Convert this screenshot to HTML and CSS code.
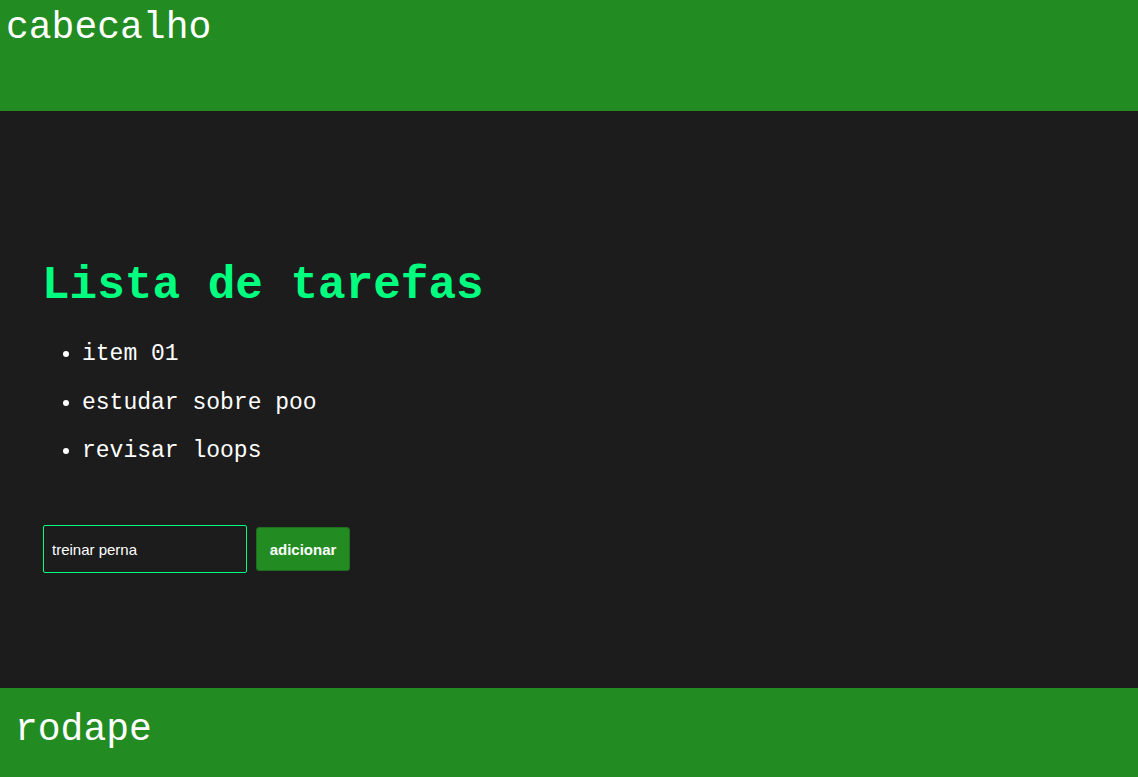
FILE: index.html
```html
<!DOCTYPE html>
<html lang="pt">
<head>
<meta charset="utf-8">
<title>Lista de tarefas</title>
<link rel="stylesheet" href="styles.css">
</head>
<body>
<header class="topo">cabecalho</header>
<main class="conteudo">
  <h1 class="titulo">Lista de tarefas</h1>
  <ul class="lista">
    <li>item 01</li>
    <li>estudar sobre poo</li>
    <li>revisar loops</li>
  </ul>
  <form class="form">
    <input class="campo" type="text" value="treinar perna">
    <button class="botao" type="button">adicionar</button>
  </form>
</main>
<footer class="rodape">rodape</footer>
</body>
</html>
```
FILE: styles.css
```css
html, body {
  margin: 0;
  padding: 0;
}
body {
  background: #1c1c1c;
  font-family: "Courier New", "Nimbus Mono PS", "Nimbus Mono L", FreeMono, "Liberation Mono", monospace;
  color: #ffffff;
  height: 777px;
  display: flex;
  flex-direction: column;
}
.topo {
  background: #228b22;
  height: 111px;
  box-sizing: border-box;
  padding: 6px 6px;
  font-size: 38px;
  line-height: 43px;
}
.conteudo {
  flex: 1;
  background: #1c1c1c;
  padding: 149px 43px 0;
}
.titulo {
  margin: 0 0 0 -1px;
  color: #00ff7f;
  font-size: 46px;
  line-height: 52px;
  font-weight: bold;
}
.lista {
  margin: 29px 0 0;
  padding-left: 39px;
  font-size: 23px;
  line-height: 27px;
}
.lista li {
  margin-bottom: 21.5px;
}
.form {
  display: flex;
  align-items: center;
  gap: 9px;
  margin-top: 60px;
}
.campo {
  width: 204px;
  height: 48px;
  box-sizing: border-box;
  background: #1c1c1c;
  border: 1px solid #00ff7f;
  border-radius: 2px;
  color: #ffffff;
  font-family: "Liberation Sans", Arial, sans-serif;
  font-size: 15px;
  padding: 0 8px;
  outline: none;
}
.botao {
  width: 94px;
  height: 44px;
  background: #228b22;
  border: 1px solid #1e6e1e;
  border-radius: 3px;
  color: #ffffff;
  font-family: "Liberation Sans", Arial, sans-serif;
  font-weight: bold;
  font-size: 15px;
  padding: 0;
}
.rodape {
  background: #228b22;
  height: 89px;
  box-sizing: border-box;
  padding: 20px 15px;
  font-size: 38px;
  line-height: 43px;
}
```
